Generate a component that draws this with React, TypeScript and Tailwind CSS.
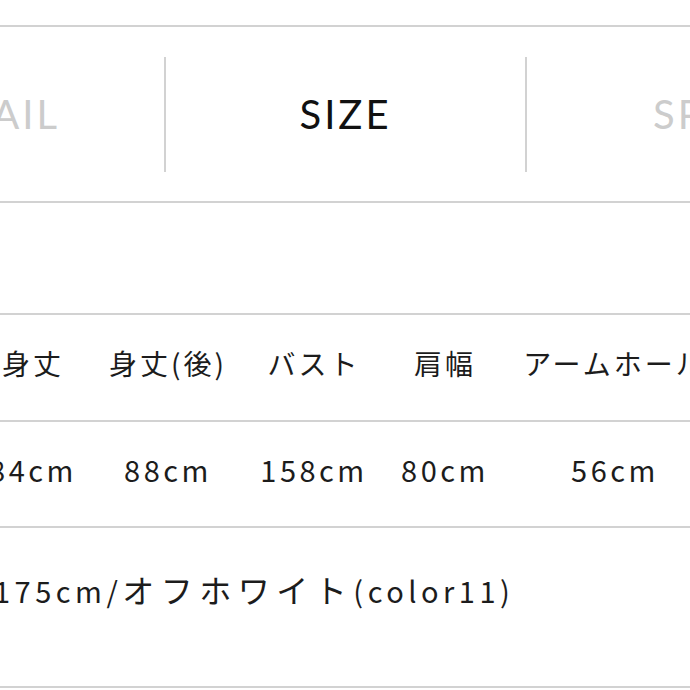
const Line = () => <div className="h-[2px] w-full shrink-0 bg-[#d2d2d2]" />

const columns = [
    { label: "身丈", value: "84cm", width: "w-[136px]" },
    { label: "身丈(後)", value: "88cm", width: "w-[134px]" },
    { label: "バスト", value: "158cm", width: "w-[158px]" },
    { label: "肩幅", value: "80cm", width: "w-[104px]" },
    { label: "アームホール", value: "56cm", width: "w-[236px]" },
]

const tabs = [
    { label: "DETAIL", active: false },
    { label: "SIZE", active: true },
    { label: "SPEC", active: false },
]

const App = () => {
    return (
        <div className="h-[690px] w-[690px] overflow-hidden bg-white font-['Noto_Sans_CJK_JP',sans-serif] text-[#1c1c1c]">
            <div className="h-[25px]" />
            <Line />

            {/* tab bar */}
            <div className="-ml-[195px] flex h-[174px] items-center">
                {tabs.map((tab, i) => (
                    <div key={tab.label} className="flex items-center">
                        {i > 0 && <div className="h-[115px] w-[2px] shrink-0 bg-[#d2d2d2]" />}
                        <div
                            className={
                                "flex w-[359px] shrink-0 justify-center font-['Lato',sans-serif] text-[40px] leading-none tracking-[3px] " +
                                (tab.active ? "text-[#111]" : "text-[#cccccc]")
                            }
                        >
                            {tab.label}
                        </div>
                    </div>
                ))}
            </div>
            <Line />

            <div className="h-[110px]" />
            <Line />

            {/* size table */}
            <div className="-ml-[35px] flex h-[105px] items-center pb-[9px]">
                {columns.map((col) => (
                    <div key={col.label} className={col.width + " shrink-0 whitespace-nowrap text-center text-[28px] tracking-[3px]"}>
                        {col.label}
                    </div>
                ))}
            </div>
            <Line />
            <div className="-ml-[35px] flex h-[104px] items-center pb-[8px]">
                {columns.map((col) => (
                    <div key={col.label} className={col.width + " shrink-0 whitespace-nowrap text-center text-[29px] tracking-[3.5px]"}>
                        {col.value}
                    </div>
                ))}
            </div>
            <Line />

            <div className="h-[158px] pt-[41px]">
                <p className="-ml-[6px] whitespace-nowrap text-[29px] leading-[40px] tracking-[4.5px]">
                    175cm/<span className="text-[32px] tracking-[6.5px]">オフホワイト</span>(color11)
                </p>
            </div>
            <Line />
        </div>
    )
}

export default App
